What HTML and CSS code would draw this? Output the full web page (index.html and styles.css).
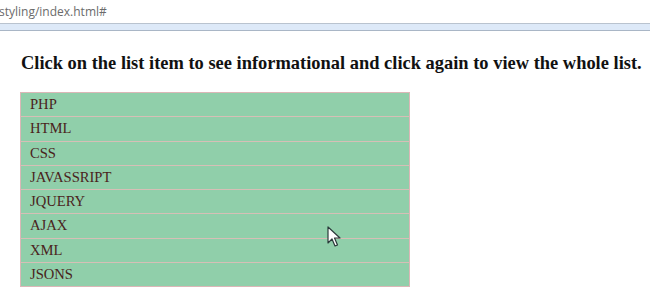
FILE: index.html
```html
<!DOCTYPE html>
<html>
<head>
<meta charset="utf-8">
<link rel="stylesheet" href="styles.css">
</head>
<body>
<div class="chrome">
  <div class="address">styling/index.html#</div>
  <div class="band"></div>
</div>
<main class="content">
  <h3 class="title">Click on the list item to see informational and click again to view the whole list.</h3>
  <ul class="list">
    <li>PHP</li>
    <li>HTML</li>
    <li>CSS</li>
    <li>JAVASSRIPT</li>
    <li>JQUERY</li>
    <li>AJAX</li>
    <li>XML</li>
    <li>JSONS</li>
  </ul>
</main>
<svg class="cursor" width="14" height="22" viewBox="0 0 14 22">
  <path d="M1 1 L1 17 L5 13 L8 20 L10.5 19 L7.5 12 L13 12 Z" fill="#fff" stroke="#2a3a3a" stroke-width="1.2" stroke-linejoin="round"/>
</svg>
</body>
</html>
```

FILE: styles.css
```css
html, body {
  margin: 0;
  padding: 0;
  background: #fff;
}
body {
  width: 650px;
  height: 290px;
  overflow: hidden;
  position: relative;
}
.chrome {
  display: flex;
  flex-direction: column;
}
.address {
  height: 23px;
  line-height: 24px;
  font-family: "Open Sans", "DejaVu Sans", sans-serif;
  font-size: 12px;
  color: #6b6b6b;
  border-bottom: 1px solid #b9c3cf;
  white-space: nowrap;
  margin-left: -1px;
}
.band {
  height: 6px;
  background: #dde9f8;
  border-bottom: 1px solid #a9b6c6;
}
.content {
  padding: 0 0 0 20px;
}
.title {
  margin: 21px 0 0 1px;
  font-family: "Liberation Serif", "Times New Roman", serif;
  font-size: 18.45px;
  font-weight: bold;
  color: #111;
  line-height: 22px;
  white-space: nowrap;
}
.list {
  list-style: none;
  margin: 18px 0 0 0;
  padding: 0;
  width: 388px;
  border: 1px solid #dbb7b7;
  background: #90cfaa;
}
.list li {
  font-family: "Liberation Serif", "Times New Roman", serif;
  font-size: 14.6px;
  color: #4a231c;
  height: 23.3px;
  line-height: 23.3px;
  padding-left: 9px;
  border-top: 1px solid #d6bfb6;
}
.list li:first-child {
  border-top: none;
}
.cursor {
  position: absolute;
  left: 327px;
  top: 226px;
}
```
